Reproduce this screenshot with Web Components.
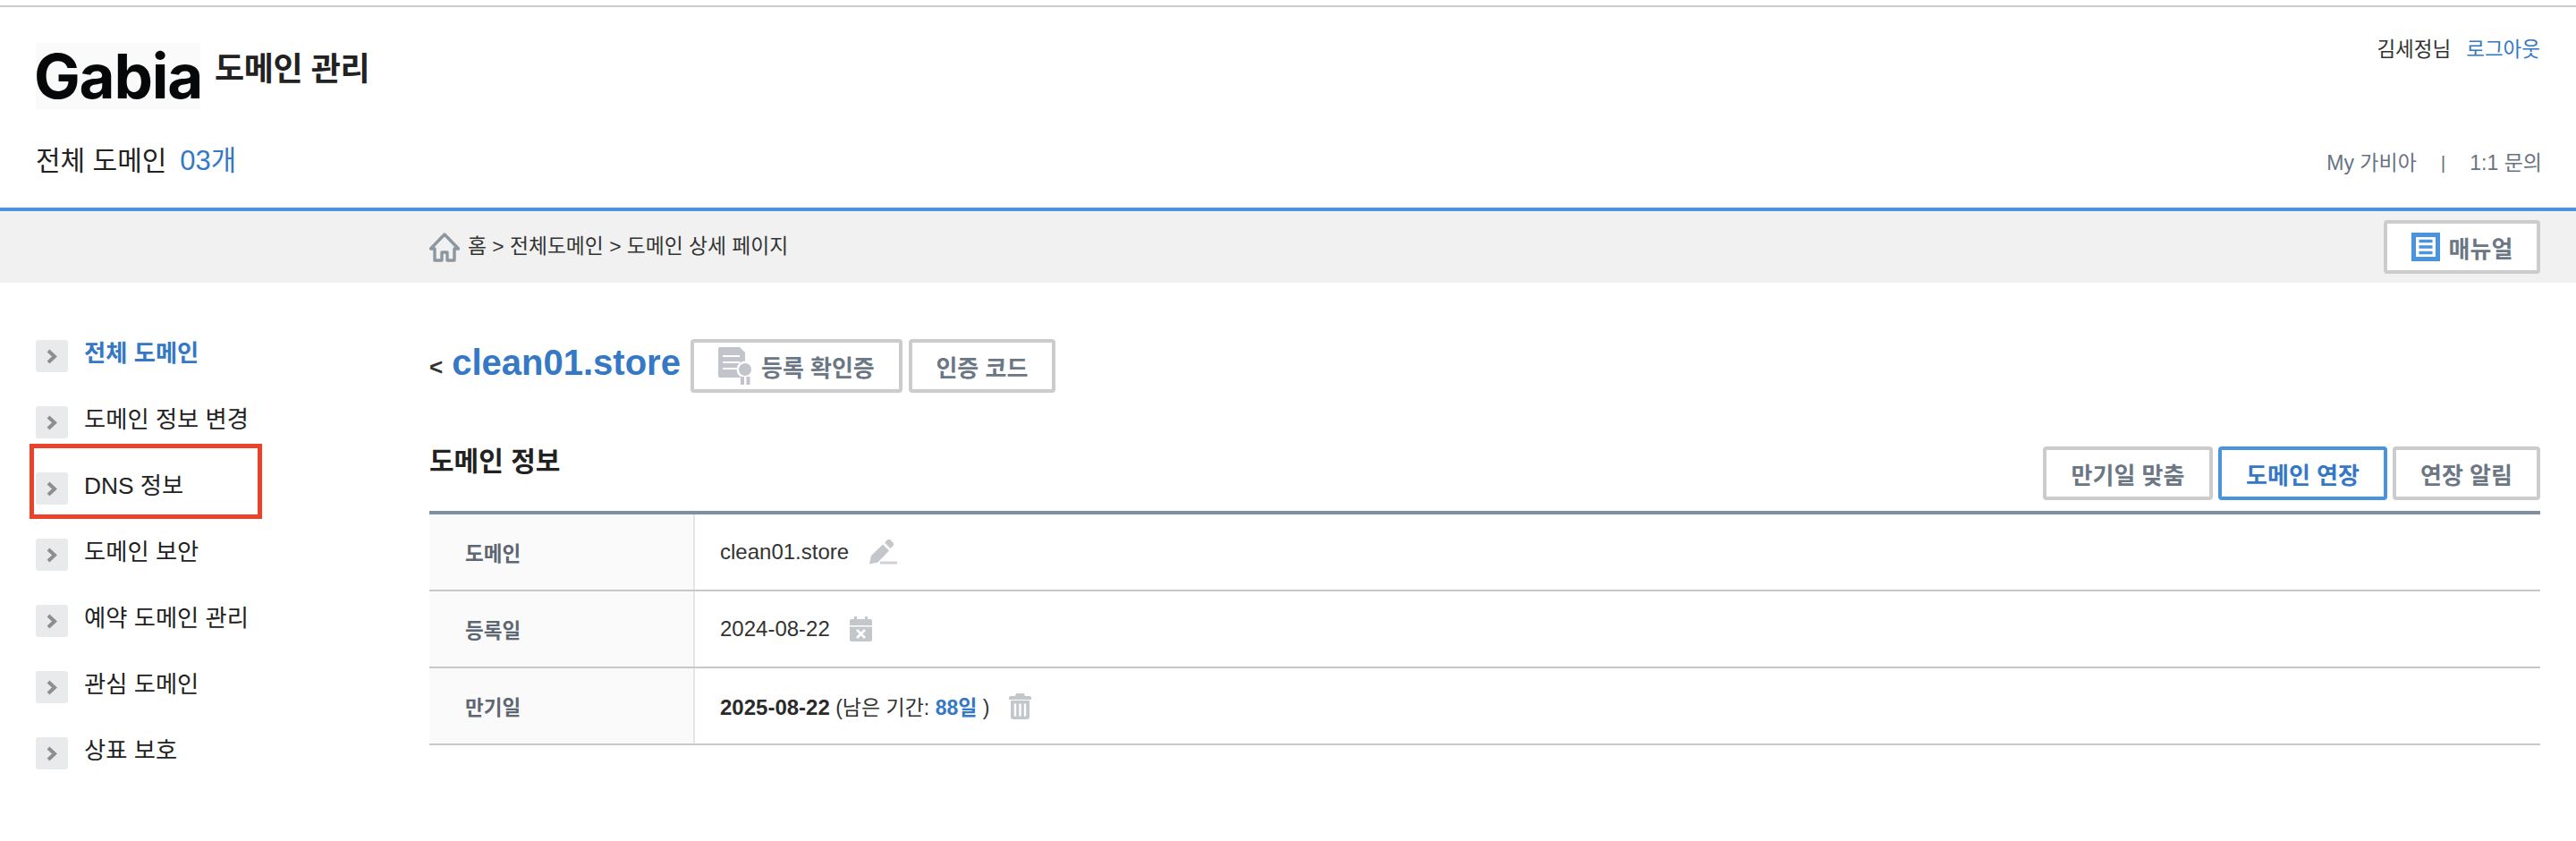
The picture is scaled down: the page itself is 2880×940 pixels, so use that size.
<!DOCTYPE html>
<html lang="ko">
<head>
<meta charset="utf-8">
<title>Gabia 도메인 관리</title>
<style>
    body {
        margin: 0;
        background: #fff;
        color: #222;
        font-family: "Liberation Sans", "Noto Sans CJK KR", sans-serif;
    }
</style>
</head>
<body>
<gabia-header></gabia-header>
<gabia-crumbs></gabia-crumbs>
<page-body>
    <side-nav slot="side">
        <nav-item active>전체 도메인</nav-item>
        <nav-item>도메인 정보 변경</nav-item>
        <nav-item marked>DNS 정보</nav-item>
        <nav-item>도메인 보안</nav-item>
        <nav-item>예약 도메인 관리</nav-item>
        <nav-item>관심 도메인</nav-item>
        <nav-item>상표 보호</nav-item>
    </side-nav>
    <domain-title></domain-title>
    <info-head></info-head>
    <info-table>
        <info-row label="도메인"><val-text>clean01.store</val-text><app-icon name="pencil"></app-icon></info-row>
        <info-row label="등록일"><val-text>2024-08-22</val-text><app-icon name="calendar"></app-icon></info-row>
        <info-row label="만기일"><val-text small><b>2025-08-22</b> (남은 기간: <blue-num>88일</blue-num> )</val-text><app-icon name="trash"></app-icon></info-row>
    </info-table>
</page-body>

<script>
class Base extends HTMLElement {
    constructor() {
        super()
        this.attachShadow({ mode: 'open' });
    }
    Css() { return '' }
    Html() { return '<slot></slot>' }
    render() {
        this.shadowRoot.innerHTML = `<style>${this.Css()}</style>${this.Html()}`;
    }
    connectedCallback() {
        this.render();
    }
}

const ICONS = {
    home: `<svg width="34" height="33" viewBox="0 0 34 33"><path d="M17 2 1.500 18H6v13h8v-9h6v9h8V18h4.500z" fill="none" stroke="#8d979f" stroke-width="3.400" stroke-linejoin="round"/></svg>`,
    manual: `<svg width="32" height="32" viewBox="0 0 32 32"><rect width="32" height="32" fill="#4a94df"/><rect x="5" y="5" width="22" height="22" fill="#fff"/><path d="M8.500 9.500h15M8.500 16h15M8.500 22.500h15" stroke="#4a94df" stroke-width="3.600"/></svg>`,
    cert: `<svg width="38" height="42" viewBox="0 0 38 42"><path d="M2 0h22l6 6v28H2a2 2 0 0 1-2-2V2a2 2 0 0 1 2-2z" fill="#c1c5cb"/><path d="M5 10h19M5 17h19M5 24h16" stroke="#fff" stroke-width="2"/><circle cx="30" cy="25" r="9.500" fill="#fff"/><circle cx="30" cy="25" r="7" fill="#c1c5cb"/><path d="M25 33h4v9h-4zM31.500 33h4v9h-4z" fill="#c1c5cb"/></svg>`,
    pencil: `<svg width="32" height="28" viewBox="0 0 32 28"><path d="M1 27.500 3 18 16 5.500l7 7L10.500 25.500z" fill="#c3c6ca"/><path d="M18 3.500 20.500 1a3.200 3.200 0 0 1 4.500 0l2 2a3.200 3.200 0 0 1 0 4.500L24.500 10z" fill="#c3c6ca"/><rect x="13" y="24.500" width="19" height="3" fill="#cfd1d4"/></svg>`,
    calendar: `<svg width="25" height="28" viewBox="0 0 25 28"><path d="M5 0h3v3h9V0h3v3h3a2 2 0 0 1 2 2v5H0V5a2 2 0 0 1 2-2h3z" fill="#c3c6ca"/><path d="M0 11.500h25V26a2 2 0 0 1-2 2H2a2 2 0 0 1-2-2z" fill="#c3c6ca"/><path d="M8 15l9 9M17 15l-9 9" stroke="#fff" stroke-width="2.800"/></svg>`,
    trash: `<svg width="25" height="29" viewBox="0 0 25 29"><path d="M8 0h9l1 3h5a2 2 0 0 1 2 2v2H0V5a2 2 0 0 1 2-2h5z" fill="#c3c6ca"/><path d="M2 8h21v18a3 3 0 0 1-3 3H5a3 3 0 0 1-3-3z" fill="#c3c6ca"/><path d="M7 11.500v14M12.500 11.500v14M18 11.500v14" stroke="#fff" stroke-width="2.400"/></svg>`,
};

class AppIcon extends Base {
    Css() { return `:host { display: inline-flex; } svg { filter: blur(.4px); }` }
    Html() { return ICONS[this.getAttribute('name')] }
}

class GabiaHeader extends Base {
    Css() {
        return `
        :host {
            display: block;
            margin-top: 6px;
            border-top: 2px solid #ccc;
            border-bottom: 4px solid #4a94df;
            height: 224px;
            padding: 0 40px;
            font-family: "Liberation Sans", "Noto Sans CJK KR", sans-serif;
        }
        .row { display: flex; justify-content: space-between; align-items: flex-start; }
        .top { height: 114px; padding-top: 40px; box-sizing: border-box; }
        .brand { display: flex; align-items: flex-start; gap: 16px; }
        .logo {
            width: 184px; height: 74px; background: #fafafa; color: #060708;
            display: flex; justify-content: center;
        }
        .logo span { font: 700 69px/74px Inter, sans-serif; letter-spacing: -1.200px; filter: blur(.5px); }
        .name { font-size: 36px; font-weight: 700; line-height: 60px; color: #222; letter-spacing: -.4px; }
        .user { display: flex; gap: 17px; font-size: 22.500px; line-height: 30px; color: #333; margin-top: -7px; }
        .blue { color: #3478c6; }
        .total { font-size: 30px; display: flex; gap: 15px; line-height: 44px; color: #222; margin-top: 36px; }
        .total .blue { font-size: 31px; }
        .links { display: flex; align-items: center; font-size: 23px; line-height: 32px; color: #68737f; gap: 27px; margin-top: 44px; margin-right: -2px; }
        .sep { font-size: 21px; }
        `;
    }
    Html() {
        return `
        <div class="row top">
            <div class="brand"><div class="logo"><span>Gabia</span></div><div class="name">도메인 관리</div></div>
            <div class="user"><span>김세정님</span><span class="blue">로그아웃</span></div>
        </div>
        <div class="row">
            <div class="total"><span>전체 도메인</span><span class="blue">03개</span></div>
            <div class="links"><span>My 가비아</span><span class="sep">|</span><span>1:1 문의</span></div>
        </div>`;
    }
}

class GabiaCrumbs extends Base {
    Css() {
        return `
        :host {
            display: flex; align-items: center; justify-content: space-between;
            height: 80px; background: #f1f1f1; padding: 0 40px 0 480px;
        }
        .path { display: flex; align-items: center; gap: 9px; font-size: 22.800px; color: #333; }
        .path span { padding-bottom: 5px; }
        `;
    }
    Html() {
        return `
        <div class="path"><app-icon name="home"></app-icon><span>홈 &gt; 전체도메인 &gt; 도메인 상세 페이지</span></div>
        <gabia-btn w="175"><app-icon name="manual"></app-icon>매뉴얼</gabia-btn>`;
    }
}

class GabiaBtn extends Base {
    Css() {
        const w = this.getAttribute('w');
        const on = this.hasAttribute('primary');
        return `
        :host {
            display: inline-flex; align-items: center; justify-content: center; gap: 10px;
            width: ${w}px; height: 60px; box-sizing: border-box;
            border: 4px solid ${on ? '#4a94df' : '#ccc'}; border-radius: 4px; background: #fff;
            color: ${on ? '#3478c6' : '#6b7785'}; font-size: 26px; font-weight: 700;
        }
        `;
    }
}

class PageBody extends Base {
    Css() {
        return `
        :host { display: grid; grid-template-columns: 480px 1fr; }
        main { padding: 63px 40px 0 0; }
        `;
    }
    Html() {
        return `<slot name="side"></slot><main><slot></slot></main>`;
    }
}

class SideNav extends Base {
    Css() {
        return `:host { display: flex; flex-direction: column; padding: 45px 0 0 40px; }`;
    }
}

class NavItem extends Base {
    Css() {
        const on = this.hasAttribute('active');
        return `
        :host {
            display: flex; align-items: center; gap: 18px; height: 74px; position: relative;
            font-size: 26.300px; color: ${on ? '#3478c6' : '#222'}; font-weight: ${on ? 700 : 400};
        }
        .chev { width: 36px; height: 36px; border-radius: 3px; background: #e9eaec; display: flex; align-items: center; justify-content: center; }
        .txt { position: relative; top: -6px; }
        .mark { position: absolute; left: -7px; top: -13px; width: 260px; height: 84px; box-sizing: border-box; border: 5px solid #ea4329; }
        `;
    }
    Html() {
        return `
        <span class="chev"><svg width="12" height="17" viewBox="0 0 12 17"><path d="M2 2l7 6.500L2 15" fill="none" stroke="#8e8e8e" stroke-width="4"/></svg></span>
        <span class="txt"><slot></slot></span>
        ${this.hasAttribute('marked') ? '<span class="mark"></span>' : ''}`;
    }
}

class DomainTitle extends Base {
    Css() {
        return `
        :host { display: flex; align-items: center; height: 60px; }
        .back { font-size: 26px; font-weight: 700; color: #333; margin-right: 10px; position: relative; top: 1px; }
        .name { font-size: 40px; font-weight: 700; color: #3478c6; margin-right: 11px; position: relative; top: -4px; }
        .gap { width: 7px; }
        `;
    }
    Html() {
        return `
        <span class="back">&lt;</span><span class="name">clean01.store</span>
        <gabia-btn w="237"><app-icon name="cert"></app-icon>등록 확인증</gabia-btn>
        <span class="gap"></span>
        <gabia-btn w="164">인증 코드</gabia-btn>`;
    }
}

class InfoHead extends Base {
    Css() {
        return `
        :host { display: flex; justify-content: space-between; margin-top: 60px; height: 60px; }
        h2 { margin: 2px 0 0; font-size: 30px; line-height: 30px; color: #222; font-weight: 700; }
        .btns { display: flex; gap: 6px; }
        `;
    }
    Html() {
        return `
        <h2>도메인 정보</h2>
        <div class="btns">
            <gabia-btn w="190">만기일 맞춤</gabia-btn>
            <gabia-btn w="189" primary>도메인 연장</gabia-btn>
            <gabia-btn w="165">연장 알림</gabia-btn>
        </div>`;
    }
}

class InfoTable extends Base {
    Css() {
        return `:host { display: block; margin-top: 12px; border-top: 4px solid #7f8fa3; }`;
    }
}

class InfoRow extends Base {
    Css() {
        return `
        :host { display: grid; grid-template-columns: 297px 1fr; height: 86px; box-sizing: border-box; border-bottom: 2px solid #c8c8c8; }
        .th {
            background: #fafafa; border-right: 2px solid #e5e5e5; padding-left: 40px;
            display: flex; align-items: center; font-size: 22.500px; font-weight: 700; color: #5d6672;
        }
        .td { display: flex; align-items: center; gap: 22px; padding-left: 28px; }
        `;
    }
    Html() {
        return `<div class="th">${this.getAttribute('label')}</div><div class="td"><slot></slot></div>`;
    }
}

class ValText extends Base {
    Css() {
        return `
        :host { font-size: ${this.hasAttribute('small') ? 23 : 24}px; color: #333; }
        ::slotted(b) { font-size: 24px; color: #2a2a2a; }
        `;
    }
}

class BlueNum extends Base {
    Css() { return `:host { color: #3478c6; font-weight: 700; }` }
}

window.customElements.define('app-icon', AppIcon);
window.customElements.define('gabia-header', GabiaHeader);
window.customElements.define('gabia-crumbs', GabiaCrumbs);
window.customElements.define('gabia-btn', GabiaBtn);
window.customElements.define('page-body', PageBody);
window.customElements.define('side-nav', SideNav);
window.customElements.define('nav-item', NavItem);
window.customElements.define('domain-title', DomainTitle);
window.customElements.define('info-head', InfoHead);
window.customElements.define('info-table', InfoTable);
window.customElements.define('info-row', InfoRow);
window.customElements.define('val-text', ValText);
window.customElements.define('blue-num', BlueNum);
</script>
</body>
</html>
